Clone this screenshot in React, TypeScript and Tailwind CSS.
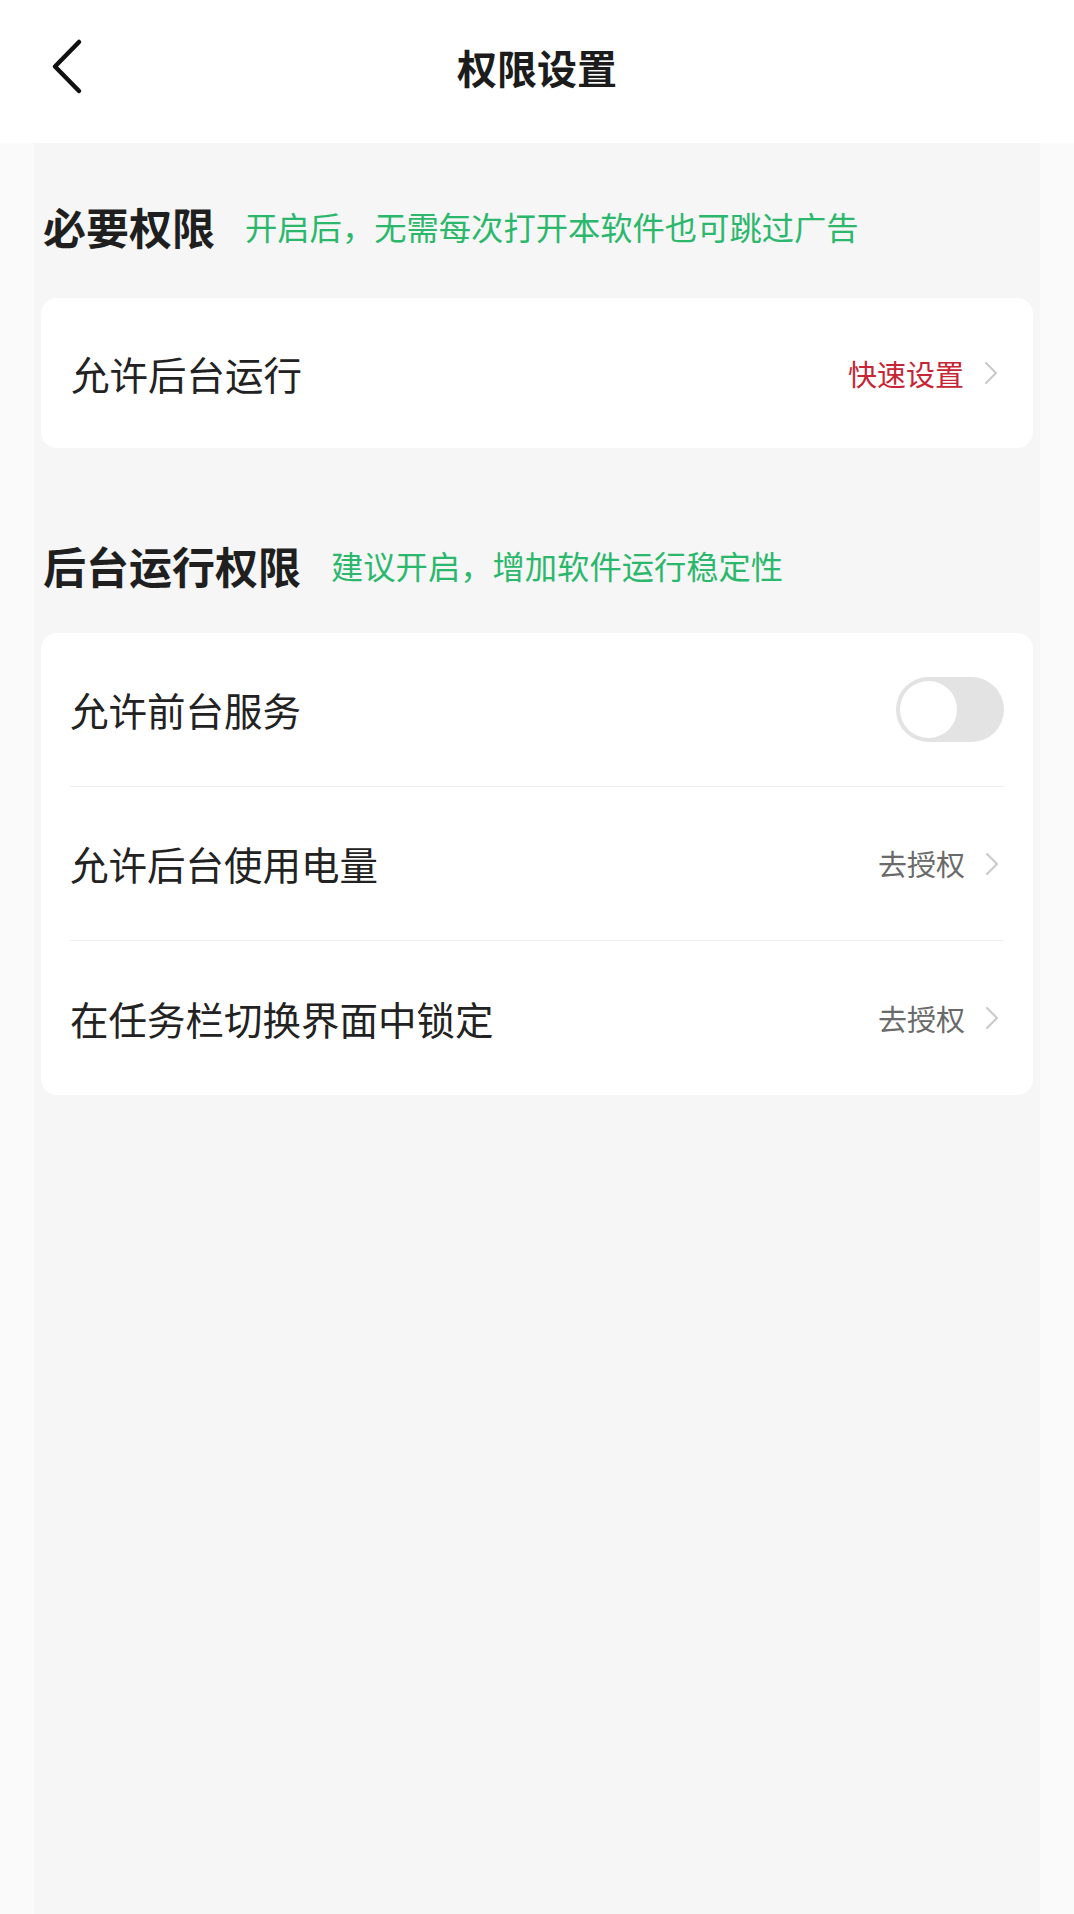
const font = "font-['Noto_Sans_CJK_SC','Noto_Sans',sans-serif]";

function Chevron() {
  return (
    <svg width="14" height="24" viewBox="0 0 14 24" fill="none" className="mr-[5px]">
      <path d="M2 2l10 10L2 22" stroke="#c9c9c9" strokeWidth="2" strokeLinecap="round" strokeLinejoin="round" />
    </svg>
  );
}

function SectionTitle({ title, hint }: { title: string; hint: string }) {
  return (
    <div className="flex items-center gap-[30px] px-[2px]">
      <h2 className="text-[43px] leading-none font-semibold text-[#1f1f1f]">{title}</h2>
      <span className="text-[32.3px] leading-none text-[#2bb86c]">{hint}</span>
    </div>
  );
}

function LinkRow({ label, action, red, tall = true }: { label: string; action: string; red?: boolean; tall?: boolean }) {
  return (
    <div
      className={
        tall
          ? "flex h-[154px] items-center justify-between border-b border-[#eeeeee] last:border-b-0"
          : "flex h-[150px] items-center justify-between"
      }
    >
      <span className="text-[38.5px] leading-none text-[#222222]">{label}</span>
      <div className="flex items-center gap-[20px]">
        <span className={red ? "text-[29px] leading-none text-[#c62535]" : "text-[29px] leading-none text-[#6a6a6a]"}>
          {action}
        </span>
        <Chevron />
      </div>
    </div>
  );
}

export default function App() {
  return (
    <div className={`min-h-screen bg-[#fafafa] ${font}`}>
      <header className="relative flex h-[143px] items-center bg-white pb-[9px]">
        <button className="absolute left-[47px] top-[36px] p-[2px]">
          <svg width="36" height="58" viewBox="0 0 36 58" fill="none">
            <path d="M30 4L6 28.5 30 53" stroke="#111111" strokeWidth="4.5" strokeLinecap="round" strokeLinejoin="round" />
          </svg>
        </button>
        <h1 className="w-full text-center text-[40px] leading-none font-semibold text-[#1c1c1c]">权限设置</h1>
      </header>

      <main className="mx-[34px] min-h-[1771px] bg-[#f6f6f6] px-[7px] pt-[62px]">
        <SectionTitle title="必要权限" hint="开启后，无需每次打开本软件也可跳过广告" />
        <div className="mt-[50px] rounded-[16px] bg-white px-[30px]">
          <LinkRow label="允许后台运行" action="快速设置" red tall={false} />
        </div>

        <div className="mt-[96px]">
          <SectionTitle title="后台运行权限" hint="建议开启，增加软件运行稳定性" />
        </div>
        <div className="mt-[46px] rounded-[16px] bg-white px-[29px]">
          <div className="flex h-[154px] items-center justify-between border-b border-[#eeeeee]">
            <span className="text-[38.5px] leading-none text-[#222222]">允许前台服务</span>
            <div className="flex h-[65px] w-[108px] items-center rounded-full bg-[#e3e3e3] p-[4px]">
              <div className="h-[57px] w-[57px] rounded-full bg-white" />
            </div>
          </div>
          <LinkRow label="允许后台使用电量" action="去授权" />
          <LinkRow label="在任务栏切换界面中锁定" action="去授权" />
        </div>
      </main>
    </div>
  );
}
